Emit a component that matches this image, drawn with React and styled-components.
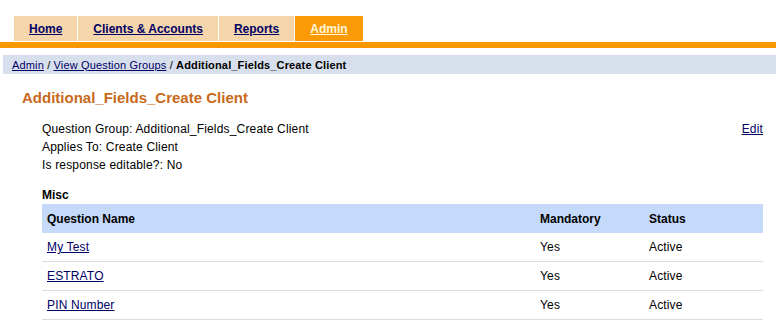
import React from "react";
import styled, { createGlobalStyle } from "styled-components";

const GlobalStyle = createGlobalStyle`
  body {
    margin: 0;
    background: #ffffff;
    font-family: "Liberation Sans", Arial, sans-serif;
    color: #000000;
  }
`;

const Page = styled.div`
  width: 779px;
`;

const TabBar = styled.nav`
  display: flex;
  gap: 1px;
  padding: 16px 0 0 14px;
  height: 25px;
`;

const Tab = styled.a`
  display: flex;
  align-items: center;
  padding: 0 15px;
  height: 25px;
  background: ${(p) => (p.active ? "#fb9a07" : "#f5d6aa")};
  color: ${(p) => (p.active ? "#fff7d8" : "#000066")};
  font-size: 12px;
  font-weight: bold;
  text-decoration: underline;
  cursor: pointer;
`;

const OrangeBar = styled.div`
  margin-top: 1px;
  width: 776px;
  height: 6px;
  background: #fb9800;
`;

const Breadcrumb = styled.div`
  margin: 7px 0 0 3px;
  width: 764px;
  height: 19px;
  padding-left: 9px;
  display: flex;
  align-items: center;
  background: #d8dfec;
  font-size: 11px;
  letter-spacing: 0.15px;
  white-space: pre;
`;

const Link = styled.a`
  color: #000066;
  text-decoration: underline;
  cursor: pointer;
`;

const Current = styled.b`
  color: #000000;
`;

const Heading = styled.h1`
  margin: 15px 0 0 22px;
  font-size: 15px;
  line-height: 18px;
  font-weight: bold;
  color: #c8691c;
`;

const Details = styled.div`
  margin: 13px 0 0 42px;
  width: 721px;
  display: flex;
  justify-content: space-between;
  font-size: 12px;
  line-height: 18px;
  letter-spacing: 0.17px;
`;

const SectionTitle = styled.div`
  margin: 13px 0 0 42px;
  font-size: 12px;
  line-height: 17px;
  font-weight: bold;
`;

const Table = styled.div`
  margin-left: 42px;
  width: 721px;
  font-size: 12px;
`;

const Row = styled.div`
  display: grid;
  grid-template-columns: 493px 109px 1fr;
  align-items: center;
  height: ${(p) => (p.header ? "29px" : "28px")};
  background: ${(p) => (p.header ? "#c5d9fb" : "transparent")};
  border-bottom: ${(p) => (p.header ? "none" : "1px solid #d9dde3")};
  font-weight: ${(p) => (p.header ? "bold" : "normal")};
  letter-spacing: ${(p) => (p.header ? "0" : "0.15px")};
`;

const Cell = styled.div`
  padding-left: 5px;
`;

const questions = [
  { name: "My Test", mandatory: "Yes", status: "Active" },
  { name: "ESTRATO", mandatory: "Yes", status: "Active" },
  { name: "PIN Number", mandatory: "Yes", status: "Active" },
];

export default function App() {
  return (
    <Page>
      <GlobalStyle />
      <TabBar>
        <Tab>Home</Tab>
        <Tab>Clients &amp; Accounts</Tab>
        <Tab>Reports</Tab>
        <Tab active>Admin</Tab>
      </TabBar>
      <OrangeBar />
      <Breadcrumb>
        <Link>Admin</Link> / <Link>View Question Groups</Link> /{" "}
        <Current>Additional_Fields_Create Client</Current>
      </Breadcrumb>
      <Heading>Additional_Fields_Create Client</Heading>
      <Details>
        <div>
          <div>Question Group: Additional_Fields_Create Client</div>
          <div>Applies To: Create Client</div>
          <div>Is response editable?: No</div>
        </div>
        <Link>Edit</Link>
      </Details>
      <SectionTitle>Misc</SectionTitle>
      <Table>
        <Row header>
          <Cell>Question Name</Cell>
          <Cell>Mandatory</Cell>
          <Cell>Status</Cell>
        </Row>
        {questions.map((q) => (
          <Row key={q.name}>
            <Cell>
              <Link>{q.name}</Link>
            </Cell>
            <Cell>{q.mandatory}</Cell>
            <Cell>{q.status}</Cell>
          </Row>
        ))}
      </Table>
    </Page>
  );
}
